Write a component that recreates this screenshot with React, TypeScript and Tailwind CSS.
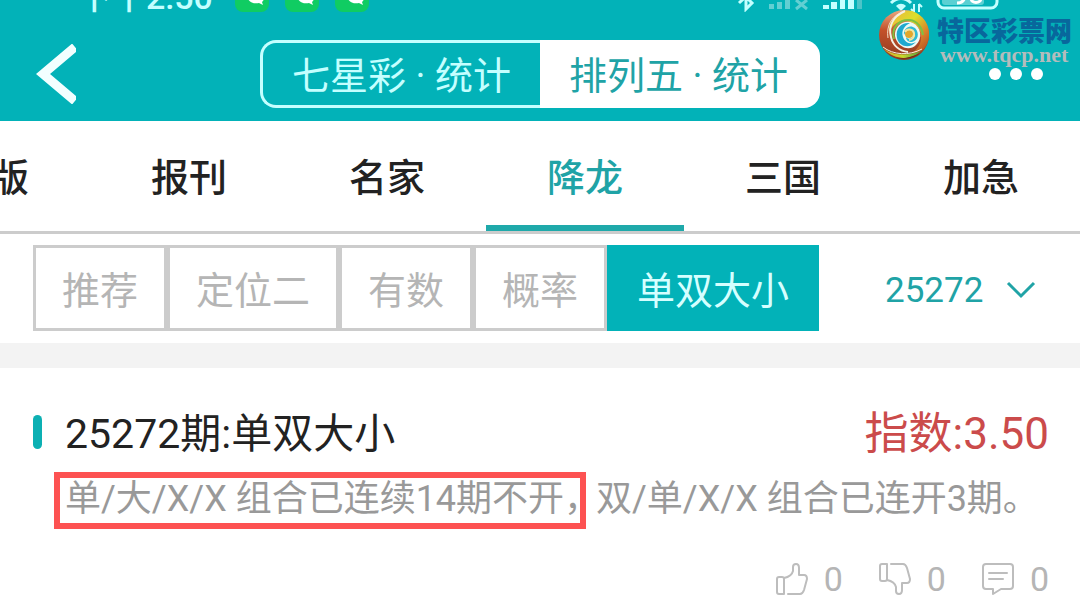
import { useState } from 'react';
import clsx from 'clsx';

const tabs = [
  { id: 'ban', label: '版' },
  { id: 'baokan', label: '报刊' },
  { id: 'mingjia', label: '名家' },
  { id: 'xianglong', label: '降龙' },
  { id: 'sanguo', label: '三国' },
  { id: 'jiaji', label: '加急' },
];

const filters = ['推荐', '定位二', '有数', '概率', '单双大小'];

function SwirlLogo() {
  return (
    <svg className="h-[54px] w-[54px] shrink-0" viewBox="0 0 54 54" fill="none" aria-hidden="true">
      <defs>
        <linearGradient id="swirlRed" x1="0" y1="0" x2="0" y2="1">
          <stop offset="0" stopColor="#e9a880" />
          <stop offset="0.4" stopColor="#c4512a" />
          <stop offset="1" stopColor="#8f3a20" />
        </linearGradient>
        <linearGradient id="swirlGold" x1="0" y1="0" x2="1" y2="1">
          <stop offset="0" stopColor="#f0b040" />
          <stop offset="0.4" stopColor="#dbe02a" />
          <stop offset="0.7" stopColor="#d9822b" />
          <stop offset="1" stopColor="#a84220" />
        </linearGradient>
        <linearGradient id="swirlGreen" x1="0" y1="0" x2="1" y2="0">
          <stop offset="0" stopColor="#d9a52b" />
          <stop offset="0.5" stopColor="#c6d92b" />
          <stop offset="1" stopColor="#4f9a3a" />
        </linearGradient>
      </defs>
      <circle cx="27" cy="27" r="25" fill="url(#swirlRed)" />
      {/* gold arm sweeping over the top and right */}
      <path d="M12 24C12 9 24 1 35 3C47 7 53 18 52 28C51 39 44 46 35 45C43 40 46 31 43 23C39 13 26 9 17 17C14 20 13 22 12 24Z" fill="url(#swirlGold)" />
      <path d="M11 30C9 17 15 7 28 3" stroke="#f3dfc8" strokeWidth="1" />
      <path d="M28 3C17 8 11 17 14 29C16 38 23 43 31 44" stroke="#f6efe2" strokeWidth="2" />
      {/* green base */}
      <path d="M7 41C17 48 32 48 44 43C35 52 18 53 7 41Z" fill="url(#swirlGreen)" />
      <path d="M6 39C16 47 32 48 45 41" stroke="#f4efdc" strokeWidth="1" />
      <path d="M19 50C29 52 38 49 43 45C36 49 28 51 19 50Z" fill="#5d2c19" />
      {/* blue core */}
      <path d="M18 28C17 18 27 11 36 15C44 19 46 30 39 37C32 44 20 39 18 28Z" fill="#eef9f4" />
      <path d="M20 30C18 20 25 14 33 15C27 18 24 23 26 29C28 35 34 37 39 34C33 41 22 39 20 30Z" fill="#1fa9cf" />
      <path d="M17 31C14 20 22 11 33 12C40 13 45 19 46 27" stroke="#7fc043" strokeWidth="2" />
      <path d="M27 27C26 20 33 16 38 20C43 25 41 33 35 34C31 34 29 32 29 29C31 32 36 31 36 27C36 22 29 22 27 27Z" fill="#2fbad4" />
      <circle cx="32" cy="26" r="4" fill="#e2a72c" />
      <path d="M28 24C30 20 36 21 37 25C38 29 35 32 32 32" stroke="#f5e6a0" strokeWidth="2" />
    </svg>
  );
}

function StatusIcons() {
  return (
    <svg className="h-3 w-[270px]" viewBox="0 0 270 12" fill="none" aria-hidden="true">
      {/* bluetooth */}
      <path d="M5 3L19 -10M5 -10L18 3L12 9V-12" stroke="#c4ffff" strokeWidth="3" />
      {/* sim without service */}
      <g fill="#62cfd2">
        <rect x="35" y="4" width="5" height="5" />
        <rect x="43" y="2" width="5" height="7" />
        <rect x="51" y="-2" width="5" height="11" />
      </g>
      <path d="M62 0L73 9M73 0L62 9" stroke="#62cfd2" strokeWidth="3" />
      {/* signal */}
      <g fill="#c4ffff">
        <rect x="89" y="5" width="6" height="4" />
        <rect x="97" y="2" width="6" height="7" />
        <rect x="106" y="-2" width="5" height="11" />
        <rect x="114" y="-4" width="6" height="13" />
      </g>
      <rect x="123" y="0" width="5" height="9" fill="#4cc4c8" />
      {/* wifi */}
      <path d="M157 3C163 -3 171 -3 177 3" stroke="#c4ffff" strokeWidth="3" />
      <path d="M162 6C165 3 169 3 172 6L167 11Z" fill="#c4ffff" />
      <path d="M180 4V12M180 12L177 9M185 12V4M185 4L188 7" stroke="#c4ffff" strokeWidth="2" />
      {/* battery */}
      <rect x="204" y="-18" width="59" height="26" rx="6" stroke="#c4ffff" strokeWidth="3" />
      <rect x="208" y="-12" width="42" height="17" rx="3" fill="#5bd0d3" />
      <path d="M223 3C227 3 230 1 231 -3M237 -2C237 4 247 4 247 -2" stroke="#fff" strokeWidth="3" />
    </svg>
  );
}

function ChatBadge() {
  return (
    <svg className="h-3 w-[34px]" viewBox="0 0 34 12" aria-hidden="true">
      <rect x="0" y="-22" width="34" height="34" rx="8" fill="#10cc62" />
      <path d="M13 -1C15 3 20 4 24 3L28 5L27 2C29 0 29 -1 29 -2H13Z" fill="#fff" />
    </svg>
  );
}

function ThumbIcon({ down }: { down?: boolean }) {
  return (
    <svg
      className={clsx('h-8 w-8', down && '-scale-y-100')}
      viewBox="0 0 32 32"
      fill="none"
      stroke="#bdbdbd"
      strokeWidth="2"
      strokeLinecap="round"
      strokeLinejoin="round"
      aria-hidden="true"
    >
      <path d="M3 14H6C7 14 8 15 8 16V31H3C2 31 1 30 1 29V16C1 15 2 14 3 14Z" />
      <path d="M8 15C13 14 16 12 17 8V4C17 2 18 1 20 1C22 1 23 3 23 5V12H28C30 12 31 14 31 16L28 27C27 30 26 31 24 31H12" />
    </svg>
  );
}

function CommentIcon() {
  return (
    <svg
      className="h-8 w-8"
      viewBox="0 0 32 32"
      fill="none"
      stroke="#bdbdbd"
      strokeWidth="2"
      strokeLinecap="round"
      strokeLinejoin="round"
      aria-hidden="true"
    >
      <path d="M4 1H28C30 1 31 2 31 4V23C31 25 30 26 28 26H19L11 31V26H4C2 26 1 25 1 23V4C1 2 2 1 4 1Z" />
      <path d="M7 10H25M7 16H21" />
    </svg>
  );
}

export default function App() {
  const [game, setGame] = useState('排列五');
  const [activeTab, setActiveTab] = useState('xianglong');
  const [activeFilter, setActiveFilter] = useState('单双大小');
  const [period, setPeriod] = useState('25272');

  return (
    <div className="overflow-hidden bg-white font-[Roboto,'Noto_Sans_CJK_SC',sans-serif] text-[38px] leading-none text-[#222]">
      {/* Header */}
      <header className="relative bg-[#02b2b8]">
        {/* Status bar, scrolled partly out of view */}
        <div className="flex h-[27px] items-start justify-between pr-[76px] pl-[78px]">
          <div className="flex items-start gap-4">
            <div className="flex h-[14px] w-[141px] items-end text-[34px] font-medium whitespace-nowrap text-[#c4ffff]">
              下午2:50
            </div>
            <ChatBadge />
            <ChatBadge />
            <ChatBadge />
          </div>
          <StatusIcons />
        </div>

        <div className="grid h-[94px] grid-cols-[1fr_560px_1fr] items-center">
          <button type="button" aria-label="返回" className="justify-self-start pl-9">
            <svg className="h-[60px] w-10" viewBox="0 0 40 60" fill="none" stroke="#f2ffff" strokeWidth="9" aria-hidden="true">
              <path d="M39 3L7 30L39 57" />
            </svg>
          </button>

          <div className="flex h-[68px]">
            {['七星彩', '排列五'].map((name) => (
              <button
                key={name}
                type="button"
                onClick={() => setGame(name)}
                className={clsx(
                  'flex-1 border-y-[3px] pt-1 whitespace-nowrap first:rounded-l-2xl first:border-l-[3px] last:rounded-r-2xl last:border-r-[3px]',
                  game === name ? 'border-white bg-white text-[#20a3a6]' : 'border-[#c4ffff] text-[#c4ffff]'
                )}
              >
                {name} · 统计
              </button>
            ))}
          </div>

          <button type="button" aria-label="更多" className="flex gap-[9px] justify-self-end pr-[37px]">
            <span className="h-3 w-3 rounded-full bg-white" />
            <span className="h-3 w-3 rounded-full bg-white" />
            <span className="h-3 w-3 rounded-full bg-white" />
          </button>
        </div>

        {/* Site mark over the header */}
        <div className="absolute top-2 right-2 flex gap-[6px]">
          <SwirlLogo />
          <div className="pt-[10px] whitespace-nowrap">
            <div className="text-[27px] leading-7 font-black text-[#08679c]">特区彩票网</div>
            <div className="pl-[3px] font-['Liberation_Serif',serif] text-[22px] leading-[17px] font-bold text-[#b3bcbc]">
              www.tqcp.net
            </div>
          </div>
        </div>
      </header>

      {/* Tabs */}
      <nav className="flex h-[113px] justify-end border-b-[3px] border-[#ccc]">
        {tabs.map((tab) => (
          <button
            key={tab.id}
            type="button"
            onClick={() => setActiveTab(tab.id)}
            className={clsx(
              'w-[198px] shrink-0 border-b-[6px] pt-[10px] font-medium',
              tab.id === 'ban' && 'pr-[61px] text-right',
              activeTab === tab.id ? 'border-[#1fa9aa] text-[#20a3a6]' : 'border-transparent'
            )}
          >
            {tab.label}
          </button>
        ))}
      </nav>

      {/* Filters and period */}
      <div className="flex items-center justify-between pt-[11px] pr-11 pb-3 pl-[33px]">
        <div className="flex h-[86px]">
          {filters.map((name) => (
            <button
              key={name}
              type="button"
              onClick={() => setActiveFilter(name)}
              className={clsx(
                'pt-[6px] whitespace-nowrap',
                activeFilter === name
                  ? 'bg-[#02b2b8] px-[30px] text-[#d5ffff]'
                  : 'border-[3px] border-[#ccc] px-[26px] text-[#b5b5b5]'
              )}
            >
              {name}
            </button>
          ))}
        </div>
        <label className="flex items-center gap-[22px] pt-1 text-[35px] text-[#20a3a6]">
          <select
            aria-label="期号"
            value={period}
            onChange={(e) => setPeriod(e.target.value)}
            className="appearance-none bg-transparent outline-none"
          >
            <option value="25272">25272</option>
          </select>
          <svg className="h-[18px] w-[30px]" viewBox="0 0 30 18" fill="none" stroke="currentColor" strokeWidth="3" aria-hidden="true">
            <path d="M2 2L15 15L28 2" />
          </svg>
        </label>
      </div>

      <div className="h-[25px] bg-[#f3f3f3]" />

      {/* Analysis entry */}
      <article className="pt-10 pr-[31px] pl-[33px]">
        <div className="flex h-12 items-center">
          <span className="mr-[23px] h-[34px] w-[9px] rounded-full bg-[#0cb0b3]" />
          <h2 className="flex-1 pt-1 text-[41px]">25272期:单双大小</h2>
          <span className="pt-1 text-[44px] text-[#cb4b4b]">指数:3.50</span>
        </div>

        <p className="mt-4 ml-[21px] flex text-[36px] whitespace-nowrap text-[#999]">
          <span className="flex h-[57px] w-[532px] items-center border-[6px] border-[#fd5252] pb-1 pl-[5px]">
            单/大/X/X 组合已连续14期不开，
          </span>
          <span className="flex items-center pb-1 pl-[10px]">双/单/X/X 组合已连开3期。</span>
        </p>

        <div className="mt-[34px] flex h-8 items-start justify-end gap-9 text-[34px] leading-8 text-[#b5b5b5]">
          <button type="button" aria-label="赞" className="flex h-8 items-center gap-4">
            <ThumbIcon />
            <span>0</span>
          </button>
          <button type="button" aria-label="踩" className="flex h-8 items-center gap-4">
            <ThumbIcon down />
            <span>0</span>
          </button>
          <button type="button" aria-label="评论" className="flex h-8 items-center gap-4">
            <CommentIcon />
            <span>0</span>
          </button>
        </div>
      </article>
    </div>
  );
}
